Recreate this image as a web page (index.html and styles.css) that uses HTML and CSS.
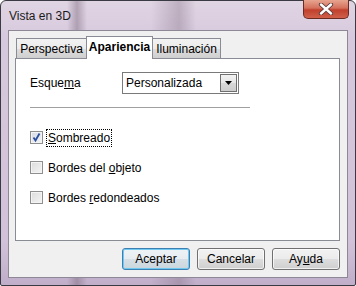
FILE: index.html
```html
<!DOCTYPE html>
<html lang="es">
<head>
<meta charset="utf-8">
<link rel="stylesheet" href="styles.css">
</head>
<body>
<div class="win">
  <div class="titlebar">
    <span class="title">Vista en 3D</span>
    <div class="close">
      <svg width="18" height="12" viewBox="0 0 18 12">
        <path d="M4 1.5 L14 10.5 M14 1.5 L4 10.5" stroke="#5a3a3a" stroke-width="4.2" stroke-linecap="round"/>
        <path d="M4 1.5 L14 10.5 M14 1.5 L4 10.5" stroke="#ffffff" stroke-width="2.4" stroke-linecap="round"/>
      </svg>
    </div>
  </div>
  <div class="client">
    <div class="tabs">
      <div class="tab t1">Perspectiva</div>
      <div class="tab active t2">Apariencia</div>
      <div class="tab t3">Iluminación</div>
    </div>
    <div class="panel">
      <div class="row">
        <span class="label">Esque<u>m</u>a</span>
        <div class="combo">
          <span class="combo-text">Personalizada</span>
          <span class="combo-btn">
            <svg width="7" height="4" viewBox="0 0 7 4"><path d="M0 0 H7 L3.5 4 Z" fill="#000"/></svg>
          </span>
        </div>
      </div>
      <div class="sep"></div>
      <div class="checks">
        <div class="check">
          <span class="box checked">
            <svg width="11" height="11" viewBox="0 0 11 11"><path d="M2.5 5.5 L4.5 8.5 L8.5 1.5" stroke="#2b4f9e" stroke-width="1.8" fill="none"/></svg>
          </span>
          <span class="ctext focus"><u>S</u>ombreado</span>
        </div>
        <div class="check">
          <span class="box"></span>
          <span class="ctext">Bordes del <u>o</u>bjeto</span>
        </div>
        <div class="check">
          <span class="box"></span>
          <span class="ctext">Bordes <u>r</u>edondeados</span>
        </div>
      </div>
    </div>
    <div class="buttons">
      <button class="btn default">Aceptar</button>
      <button class="btn">Cancelar</button>
      <button class="btn">Ay<u>u</u>da</button>
    </div>
  </div>
</div>
</body>
</html>
```

FILE: styles.css
```css
html, body {
  margin: 0;
  padding: 0;
  background: #ffffff;
}
body {
  font-family: "Liberation Sans", Arial, sans-serif;
  font-size: 12px;
  color: #000;
}
.win {
  width: 356px;
  height: 286px;
  box-sizing: border-box;
  border: 1px solid #3a3a44;
  border-radius: 6px 6px 2px 2px;
  background:
    linear-gradient(90deg, rgba(255,255,255,0) 0px, rgba(255,255,255,0) 66px, rgba(110,90,110,0.4) 76px, rgba(255,255,255,0) 86px, rgba(255,255,255,0) 150px, rgba(110,90,110,0.3) 178px, rgba(255,255,255,0) 195px, rgba(255,255,255,0) 356px),
    linear-gradient(180deg, #e0d5e3 0px, #d6c8dd 40px, #d2c2d9 240px, #bfadc9 286px);
  padding: 0 7px;
  display: flex;
  flex-direction: column;
}
.titlebar {
  height: 29px;
  display: flex;
  align-items: flex-start;
  justify-content: space-between;
}
.title {
  margin-top: 8px;
  margin-left: 1px;
  font-size: 12px;
  color: #1a1a1a;
}
.close {
  width: 46px;
  height: 19px;
  margin-right: -1px;
  margin-top: -1px;
  box-sizing: border-box;
  border: 1px solid #6b2a22;
  border-top: none;
  border-radius: 0 0 5px 5px;
  background: linear-gradient(180deg, #e8a590 0%, #d4705c 45%, #c0402c 55%, #d0604a 100%);
  display: flex;
  align-items: center;
  justify-content: center;
}
.client {
  width: 340px;
  height: 248px;
  box-sizing: border-box;
  border: 1px solid #8e8896;
  background: #f0f0f0;
  padding: 5px 7px 7px 6px;
  display: flex;
  flex-direction: column;
}
.tabs {
  height: 22px;
  display: flex;
  align-items: flex-end;
  padding-left: 1px;
  position: relative;
  z-index: 1;
}
.tab {
  box-sizing: border-box;
  height: 20px;
  border: 1px solid #898c95;
  border-bottom: none;
  background: linear-gradient(180deg, #f2f2f2 0%, #ebebeb 50%, #dddddd 51%, #cfcfcf 100%);
  display: flex;
  align-items: center;
  justify-content: center;
  font-size: 12px;
  color: #000;
  margin-bottom: 0;
}
.t1 { width: 70px; border-right: none; }
.t2 { width: 67px; }
.t3 { width: 68px; border-left: none; }
.tab.active {
  height: 23px;
  margin-bottom: -1px;
  background: #ffffff;
  font-weight: bold;
  padding-bottom: 2px;
}
.panel {
  height: 183px;
  box-sizing: border-box;
  border: 1px solid #898c95;
  background: #ffffff;
  padding: 13px 0 0 14px;
  display: flex;
  flex-direction: column;
}
.row {
  display: flex;
  align-items: center;
  height: 22px;
}
.label {
  width: 92px;
}
.combo {
  width: 117px;
  height: 22px;
  box-sizing: border-box;
  border: 1px solid #7a7a7a;
  display: flex;
  align-items: center;
  justify-content: space-between;
  padding: 0 1px 0 3px;
}
.combo-text {
  color: #000;
}
.combo-btn {
  width: 17px;
  height: 18px;
  box-sizing: border-box;
  border: 1px solid #707070;
  background: linear-gradient(180deg, #f2f2f2 0%, #e6e6e6 50%, #d8d8d8 51%, #cdcdcd 100%);
  display: flex;
  align-items: center;
  justify-content: center;
}
.sep {
  width: 220px;
  height: 1px;
  background: #a0a0a0;
  margin-top: 13px;
}
.checks {
  margin-top: 23px;
  display: flex;
  flex-direction: column;
  gap: 17px;
}
.check {
  display: flex;
  align-items: center;
  height: 13px;
}
.box {
  width: 13px;
  height: 13px;
  box-sizing: border-box;
  border: 1px solid #8f8f8f;
  background: linear-gradient(135deg, #dcdcdc 0%, #f4f4f4 100%);
  box-shadow: inset 0 0 0 1px #f4f4f4;
  display: flex;
  align-items: center;
  justify-content: center;
  margin-right: 4px;
}
.box.checked {
  background: linear-gradient(135deg, #d8dbe6 0%, #f4f4f4 100%);
}
.ctext {
  padding: 1px 1px;
}
.ctext.focus {
  outline: 1px dotted #000;
  outline-offset: 0;
}
.buttons {
  margin-top: 7px;
  height: 22px;
  display: flex;
  justify-content: flex-end;
  gap: 7px;
  padding-right: 0;
}
.btn {
  width: 68px;
  height: 22px;
  box-sizing: border-box;
  border: 1px solid #707070;
  border-radius: 3px;
  background: linear-gradient(180deg, #f2f2f2 0%, #ebebeb 50%, #dddddd 51%, #cfcfcf 100%);
  font-family: "Liberation Sans", Arial, sans-serif;
  font-size: 12px;
  color: #000;
  padding: 0;
  box-shadow: inset 0 0 0 1px rgba(255,255,255,0.7);
}
.btn.default {
  border-color: #3c7fb1;
  box-shadow: inset 0 0 0 1px #6fc8f0;
  background: linear-gradient(180deg, #eef3f6 0%, #e6ecf0 50%, #d6dfe5 51%, #cad5dd 100%);
}
```
